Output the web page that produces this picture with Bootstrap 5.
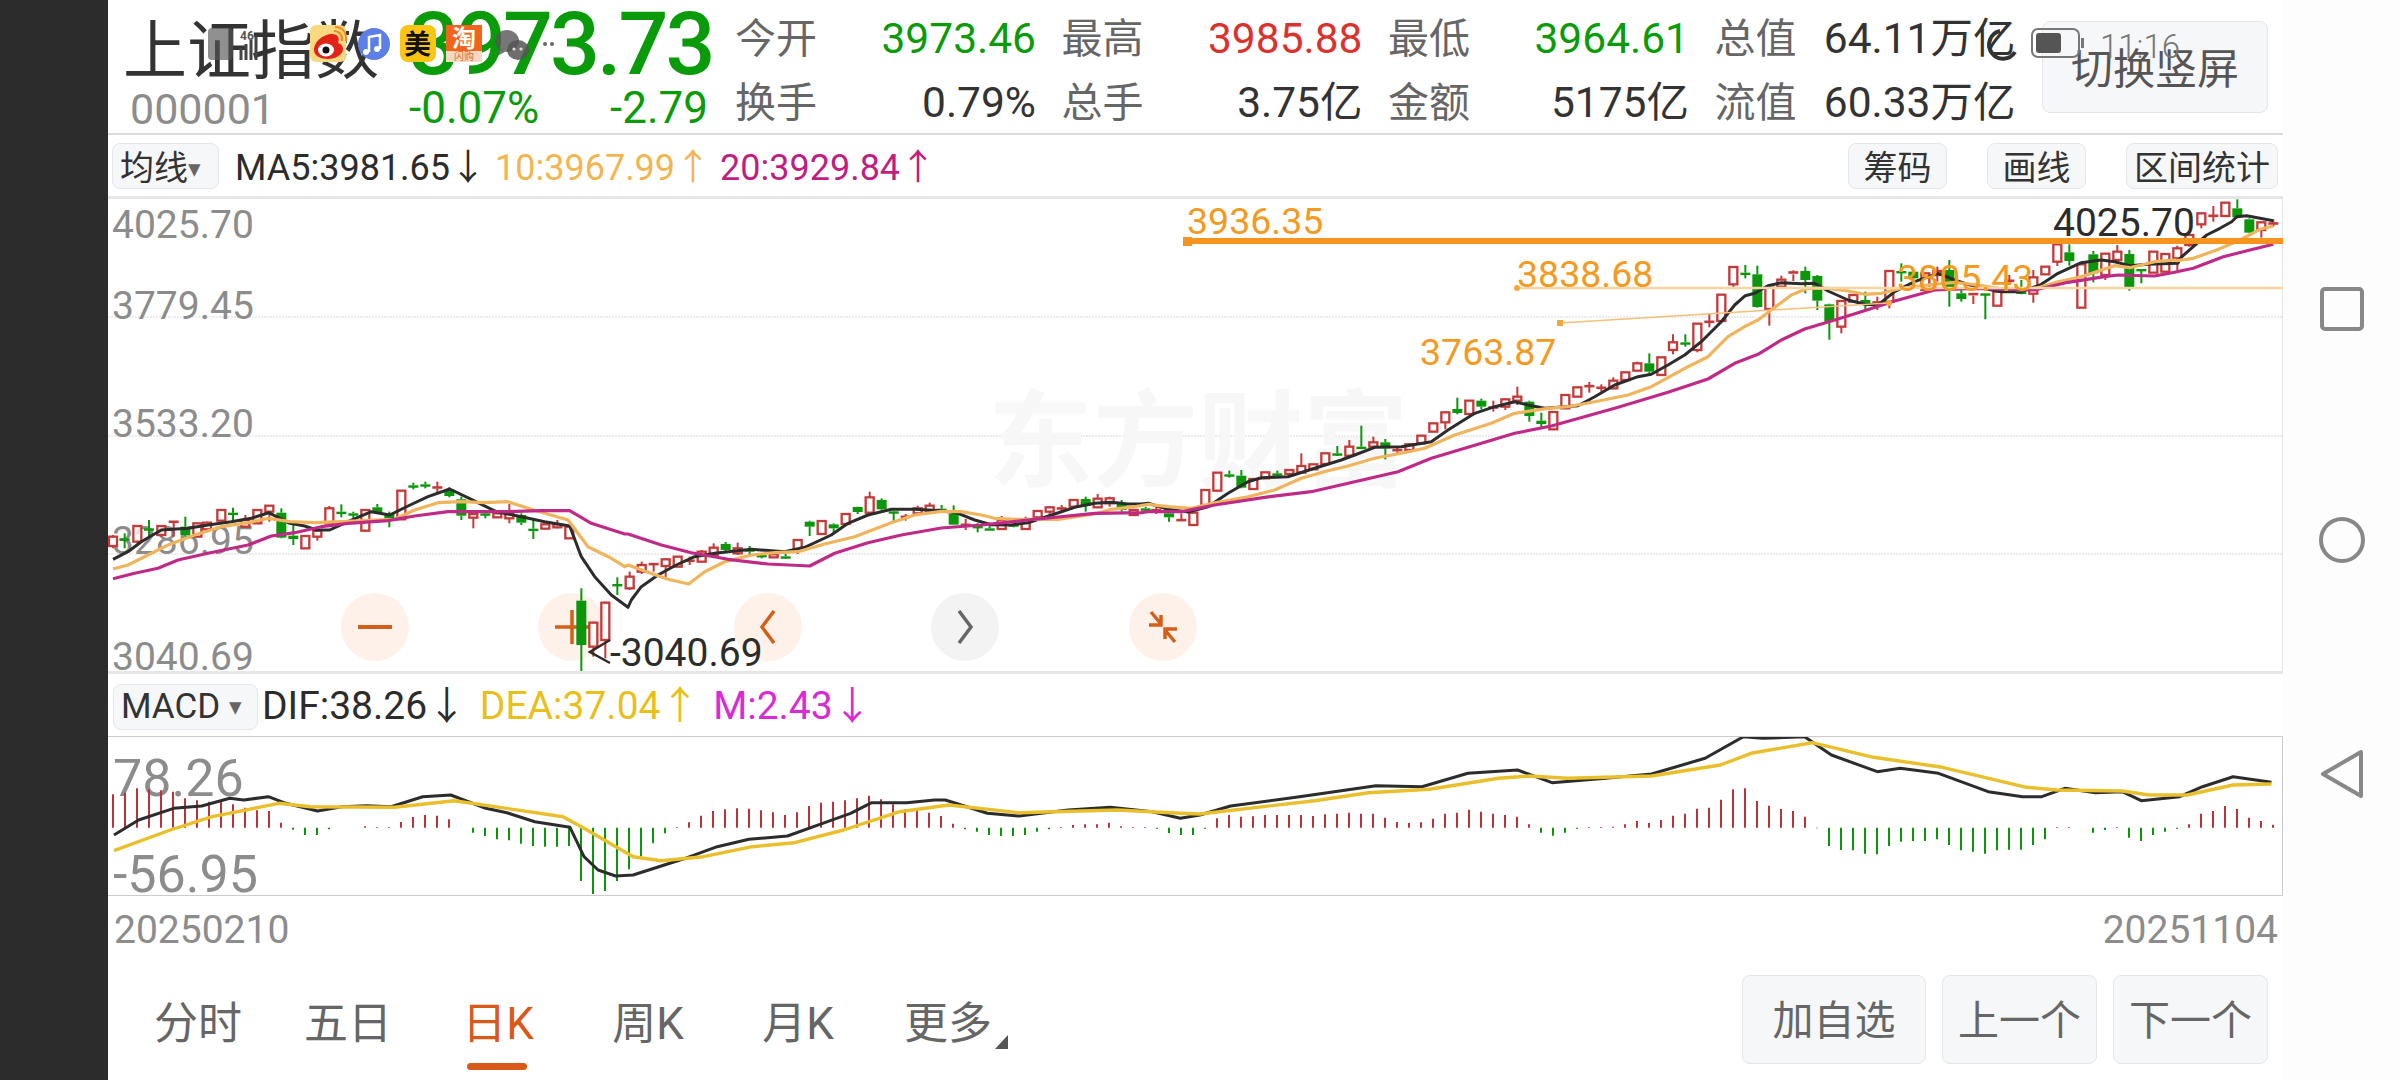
<!DOCTYPE html>
<html lang="zh">
<head>
<meta charset="utf-8">
<title>上证指数</title>
<link href="https://cdn.jsdelivr.net/npm/bootstrap@5.3.0/dist/css/bootstrap.min.css" rel="stylesheet">
<style>
html,body{margin:0;height:1080px;overflow:hidden;background:#fff}
body,button,text{font-family:"Roboto","Noto Sans CJK SC",sans-serif}
.app-shell{width:2400px;height:1080px}
.side-dark{width:108px;background:#2c2c2c;flex:none}
.side-nav{width:117px;background:#fdfdfd;flex:none;padding-top:287px;gap:186px}
.main-pane{width:2175px;flex:none;position:relative}
.head-row{height:135px;border-bottom:2px solid #dcdcdc;padding-left:15px}
.name-block{width:286px;flex:none}
.name-main{font-size:64px;line-height:72px;margin-top:16px;color:#333;white-space:nowrap}
.name-code{font-size:43px;line-height:44px;color:#8c8c8c;margin-left:7px;margin-top:-1px}
.price-block{width:299px;flex:none;margin-right:27px}
.price-big{font-size:88px;font-weight:500;line-height:88px;color:#0a9b0a;letter-spacing:-3px;white-space:nowrap}
.price-sub{font-size:44px;line-height:48px;color:#0a9b0a;margin-top:-4px}
.stat-grid{display:grid;grid-template-columns:repeat(4,80px 195.5px);column-gap:25.5px;grid-auto-rows:64px;padding-top:7px;font-size:42.5px;line-height:64px;height:134px}
.stat-label{color:#666;white-space:nowrap;font-size:41px}
.stat-val{text-align:right;color:#333;white-space:nowrap}
.tone-up{color:#d8332f}
.tone-down{color:#0a9b0a}
.soft-btn.btn{background:#f6f7f9;border:1.5px solid #e3e6ea;border-radius:8px;color:#555;padding:0;--bs-btn-hover-bg:#f6f7f9}
.switch-btn.btn{position:absolute;left:1934px;top:21px;width:226px;height:92px;font-size:42px;padding-top:5px}
.tool-row{height:64px;border-bottom:3px solid #e6e6e6;padding-left:4px;padding-top:8px}
.tool-btn.btn{height:46px;font-size:34px;line-height:40px;color:#333;white-space:nowrap;padding-top:3px}
.select-btn.btn{width:107px;text-align:left;padding-left:7px}
.caret-mark{font-size:25px;color:#666;vertical-align:3px;line-height:1}
.legend-line{font-size:36px;line-height:46px;white-space:nowrap;margin-top:2px}
.legend-ma5{color:#2c2c2c}
.legend-ma10{color:#f3b551}
.legend-ma20{color:#bf1f80}
.legend-dea{color:#e9bf1c}
.legend-m{color:#d82bd6}
.chart-tools{margin-left:auto;gap:40px;padding-right:5px}
.wide-tool.btn{width:99px}
.wider-tool.btn{width:152px}
.k-chart{height:472px;position:relative;border-right:1.5px solid #e4e4e4}
.k-chart svg,.macd-chart svg{display:block;position:relative}
.round-key{position:absolute;top:394px;width:68px;height:68px;border-radius:50%;background:#fdf1ea;border:0;padding:0}
.round-key.is-off{background:#f3f3f3}
.round-key svg{position:static;margin:auto}
.key-a{left:233px}.key-b{left:430px}.key-c{left:626px}.key-d{left:823px}.key-e{left:1021px}
.macd-tools{height:65px;padding-left:5px;padding-top:10px;border-top:3px solid #e6e6e6}
.macd-btn.btn{width:145px;height:46px;font-size:35px;line-height:40px;color:#333;text-align:left;padding-left:7px;white-space:nowrap}
.macd-legend{font-size:39px;line-height:46px;white-space:nowrap;margin-top:-1px}
.macd-legend span+span{margin-left:4px}
.macd-chart{height:160px;border-top:1.5px solid #ccc;border-bottom:1.5px solid #ccc;border-right:1.5px solid #ccc}
.date-row{height:67px;font-size:39px;line-height:68px;color:#8c8c8c;padding:0 5px 0 6px}
.tab-row{height:117px;padding-left:15px}
.tab-list .nav-link{width:150px;padding:31px 0 40px;font-size:44px;line-height:60px;color:#666;text-align:center;position:relative}
.tab-list .nav-link.active{color:#d9591b}
.tab-list .nav-link.active::after{content:"";position:absolute;left:44px;width:60px;top:100px;height:7px;border-radius:4px;background:#d9591b}
.more-mark{position:absolute;left:122px;top:72px;width:0;height:0;border-left:13px solid transparent;border-bottom:14px solid #555}
.foot-btns{margin-left:auto;gap:16px;padding:12px 15px 0 0}
.foot-btn.btn{height:89px;font-size:41px;color:#666;padding-top:5px}
.foot-a.btn{width:184px}.foot-b.btn{width:155px}
.status-layer{position:absolute;left:0;top:0;pointer-events:none}
.chart-axis{font-size:39px;fill:#8c8c8c}
.chart-note{font-size:37.5px;fill:#f29a22}
.chart-mark{font-size:39px;fill:#2c2c2c}
.wm-text{font-size:105px;font-weight:700;fill:#f7f7f7}
.macd-axis{font-size:52px;fill:#8c8c8c}
.st-time{font-size:33px;fill:#777;font-weight:300}
.st-mini{font-size:12px;fill:#555;font-weight:700}
.st-mei{font-size:27px;fill:#111;font-weight:700}
.st-tao{font-size:24px;fill:#fff;font-weight:700}
.st-shan{font-size:10px;fill:#e0662a}
</style>
</head>
<body>
<div class="app-shell d-flex">
  <div class="side-dark"></div>
  <div class="main-pane">
    <div class="head-row d-flex">
      <div class="name-block">
        <div class="name-main">上证指数</div>
        <div class="name-code">000001</div>
      </div>
      <div class="price-block">
        <div class="price-big">3973.73</div>
        <div class="price-sub d-flex justify-content-between"><span>-0.07%</span><span>-2.79</span></div>
      </div>
      <div class="stat-grid">
        <div class="stat-label">今开</div><div class="stat-val tone-down">3973.46</div>
        <div class="stat-label">最高</div><div class="stat-val tone-up">3985.88</div>
        <div class="stat-label">最低</div><div class="stat-val tone-down">3964.61</div>
        <div class="stat-label">总值</div><div class="stat-val">64.11万亿</div>
        <div class="stat-label">换手</div><div class="stat-val">0.79%</div>
        <div class="stat-label">总手</div><div class="stat-val">3.75亿</div>
        <div class="stat-label">金额</div><div class="stat-val">5175亿</div>
        <div class="stat-label">流值</div><div class="stat-val">60.33万亿</div>
      </div>
      <button class="btn soft-btn switch-btn">切换竖屏</button>
    </div>

    <div class="tool-row d-flex align-items-start">
      <button class="btn soft-btn tool-btn select-btn">均线<span class="caret-mark">▾</span></button>
      <div class="legend-line ms-3">
        <span class="legend-ma5">MA5:3981.65↓</span>
        <span class="legend-ma10">10:3967.99↑</span>
        <span class="legend-ma20">20:3929.84↑</span>
      </div>
      <div class="chart-tools d-flex">
        <button class="btn soft-btn tool-btn wide-tool">筹码</button>
        <button class="btn soft-btn tool-btn wide-tool">画线</button>
        <button class="btn soft-btn tool-btn wider-tool">区间统计</button>
      </div>
    </div>

    <div class="k-chart">
      <button class="round-key key-a" aria-label="缩小"><svg width="34" height="34" viewBox="0 0 34 34"><path d="M0 17H34" stroke="#d2601a" stroke-width="4"/></svg></button>
      <button class="round-key key-b" aria-label="放大"><svg width="34" height="34" viewBox="0 0 34 34"><path d="M0 17H34M17 0V34" stroke="#d2601a" stroke-width="3.5"/></svg></button>
      <button class="round-key key-c" aria-label="左移"><svg width="34" height="34" viewBox="0 0 34 34"><path d="M23 1L11 17L23 33" fill="none" stroke="#d2601a" stroke-width="3.5"/></svg></button>
      <button class="round-key key-d is-off" aria-label="右移"><svg width="34" height="34" viewBox="0 0 34 34"><path d="M11 1L23 17L11 33" fill="none" stroke="#666" stroke-width="3.5"/></svg></button>
      <button class="round-key key-e" aria-label="收起"><svg width="34" height="34" viewBox="0 0 34 34"><path d="M5 2L15 14M15 5V15H3M29 32L19 20M19 29V19H31" fill="none" stroke="#d2601a" stroke-width="3.5"/></svg></button>
      <svg id="kSvg" width="2175" height="472" viewBox="108 199 2175 472">
        <g stroke="#d8d8d8" stroke-width="1" stroke-dasharray="2 1">
          <path d="M108 317H2283M108 436H2283M108 554H2283"/>
        </g>
        <text class="wm-text" x="988" y="478">东方财富</text>
        <text class="chart-axis" x="112" y="238">4025.70</text>
        <text class="chart-axis" x="112" y="319">3779.45</text>
        <text class="chart-axis" x="112" y="437">3533.20</text>
        <text class="chart-axis" x="112" y="554">3286.95</text>
        <text class="chart-axis" x="112" y="670">3040.69</text>
        <g id="candles"></g>
        <polyline id="ma5" fill="none" stroke="#2c2c2c" stroke-width="3" stroke-linejoin="round"/>
        <polyline id="ma10" fill="none" stroke="#f0b45c" stroke-width="3.2" stroke-linejoin="round"/>
        <polyline id="ma20" fill="none" stroke="#bf2a87" stroke-width="3.2" stroke-linejoin="round"/>
        <path d="M1183 241H2283" stroke="#f7941d" stroke-width="6"/>
        <rect x="1183" y="237" width="9" height="9" fill="#f7941d"/>
        <path d="M1517 288H2283" stroke="#f4d5a4" stroke-width="2.5"/>
        <circle cx="1517" cy="288" r="3" fill="#f2a63c"/>
        <path d="M1560 323L1888 303" stroke="#f2c078" stroke-width="1.5"/>
        <rect x="1557" y="320" width="6" height="6" fill="#f2a63c"/>
        <circle cx="1889" cy="303" r="3" fill="#f2a63c"/>
        <text class="chart-note" x="1187" y="234">3936.35</text>
        <text class="chart-note" x="1517" y="287">3838.68</text>
        <text class="chart-note" x="1420" y="365">3763.87</text>
        <text class="chart-note" x="1897" y="291">3805.43</text>
        <text class="chart-mark" x="2053" y="236">4025.70</text>
        <path d="M610 640L590 652L610 663" fill="none" stroke="#2c2c2c" stroke-width="2.5"/>
        <text class="chart-mark" x="610" y="666">-3040.69</text>
      </svg>
    </div>

    <div class="macd-tools d-flex align-items-start">
      <button class="btn soft-btn macd-btn">MACD <span class="caret-mark">▾</span></button>
      <div class="macd-legend ms-1">
        <span class="legend-ma5">DIF:38.26↓</span>
        <span class="legend-dea">DEA:37.04↑</span>
        <span class="legend-m">M:2.43↓</span>
      </div>
    </div>

    <div class="macd-chart">
      <svg id="mSvg" width="2174" height="157" viewBox="108 737 2174 157">
        <text class="macd-axis" x="113" y="796">78.26</text>
        <text class="macd-axis" x="113" y="892">-56.95</text>
        <g id="bars"></g>
        <polyline id="dif" fill="none" stroke="#2c2c2c" stroke-width="3" stroke-linejoin="round"/>
        <polyline id="dea" fill="none" stroke="#e9bf2c" stroke-width="3.4" stroke-linejoin="round"/>
      </svg>
    </div>

    <div class="date-row d-flex justify-content-between"><span>20250210</span><span>20251104</span></div>

    <div class="tab-row d-flex">
      <ul class="nav tab-list flex-nowrap">
        <li class="nav-item"><a class="nav-link" href="#">分时</a></li>
        <li class="nav-item"><a class="nav-link" href="#">五日</a></li>
        <li class="nav-item"><a class="nav-link active" href="#">日K</a></li>
        <li class="nav-item"><a class="nav-link" href="#">周K</a></li>
        <li class="nav-item"><a class="nav-link" href="#">月K</a></li>
        <li class="nav-item"><a class="nav-link" href="#">更多<span class="more-mark"></span></a></li>
      </ul>
      <div class="foot-btns d-flex">
        <button class="btn soft-btn foot-btn foot-a">加自选</button>
        <button class="btn soft-btn foot-btn foot-b">上一个</button>
        <button class="btn soft-btn foot-btn foot-b">下一个</button>
      </div>
    </div>

    <svg class="status-layer" width="2175" height="135" viewBox="108 0 2175 135">
      <rect x="208" y="28" width="25" height="32" rx="4" fill="#555" opacity=".65"/>
      <text class="st-mini" x="240" y="40">46</text>
      <path d="M241 48v12M246 44v16M251 40v20M256 36v24" stroke="#444" stroke-width="3"/>
      <rect x="310" y="25" width="36" height="37" rx="6" fill="#f8d980"/>
      <path d="M314 50c0-9 10-16 18-16c6 0 8 4 6 9c4 1 5 4 5 6c0 6-8 10-15 10c-7 0-14-3-14-9z" fill="#e2231a"/>
      <ellipse cx="326" cy="50" rx="8" ry="6.5" fill="#fff"/>
      <circle cx="326" cy="50" r="3.5" fill="#111"/>
      <path d="M334 31c5 0 9 4 8 10M335 27c8 0 12 6 11 14" fill="none" stroke="#f08a1d" stroke-width="2"/>
      <circle cx="374" cy="44" r="16" fill="#5b7fe6"/>
      <path d="M369 52V37L380 35V49" fill="none" stroke="#fff" stroke-width="2.5"/>
      <circle cx="366" cy="52" r="3" fill="#fff"/><circle cx="377" cy="49" r="3" fill="#fff"/>
      <rect x="400" y="25" width="36" height="37" rx="8" fill="#fcc515"/>
      <text class="st-mei" x="404" y="54">美</text>
      <rect x="446" y="25" width="36" height="26" fill="#f0641e"/>
      <rect x="446" y="51" width="36" height="11" fill="#f6d9c4"/>
      <text class="st-tao" x="452" y="47">淘</text>
      <text class="st-shan" x="454" y="60">闪购</text>
      <ellipse cx="507" cy="41" rx="12" ry="11" fill="#555" opacity=".8"/>
      <path d="M500 49l-3 7l8-4z" fill="#555" opacity=".8"/>
      <ellipse cx="518" cy="50" rx="11" ry="10" fill="#555" opacity=".85"/>
      <circle cx="514" cy="49" r="1.6" fill="#ddd"/><circle cx="521" cy="49" r="1.6" fill="#ddd"/>
      <circle cx="545" cy="44" r="2" fill="#666"/><circle cx="552" cy="44" r="2" fill="#666"/>
      <path d="M2000 31A14 14 0 1 0 2015 52" fill="none" stroke="#333" stroke-width="4"/>
      <rect x="2032" y="29" width="47" height="28" rx="6" fill="none" stroke="#777" stroke-width="2"/>
      <rect x="2036" y="33" width="25" height="20" rx="3" fill="#555"/>
      <rect x="2081" y="38" width="3" height="10" fill="#777"/>
      <text class="st-time" x="2100" y="58">11:16</text>
    </svg>
  </div>
  <div class="side-nav d-flex flex-column align-items-center">
    <svg width="44" height="44" viewBox="0 0 44 44"><rect x="2" y="2" width="40" height="40" rx="3" fill="none" stroke="#888" stroke-width="4"/></svg>
    <svg width="46" height="46" viewBox="0 0 46 46"><circle cx="23" cy="23" r="21" fill="none" stroke="#888" stroke-width="4"/></svg>
    <svg width="44" height="50" viewBox="0 0 44 50"><path d="M41 3V47L3 25Z" fill="none" stroke="#888" stroke-width="4" stroke-linejoin="round"/></svg>
  </div>
</div>

<script>
var NS="http://www.w3.org/2000/svg";
function el(p,n,a){var e=document.createElementNS(NS,n);for(var k in a)e.setAttribute(k,a[k]);p.appendChild(e);return e;}
var crops=[
[108,470,[[15,'r',200,228,195,235],[50,'g',205,210,190,235],[88,'r',168,215,165,220],[123,'g',175,180,150,200],[160,'r',168,195,165,200],[197,'r',153,157,153,200],[232,'g',170,195,140,200],[268,'r',160,200],[297,'r',158,178,155,180],[340,'r',120,152,118,155],[375,'g',128,132,113,152],[412,'r',150,170,135,172],[448,'r',120,160],[484,'r',107,125,105,155],[520,'g',128,203,115,205],[556,'g',197,207,165,225],[592,'r',198,235],[628,'r',182,200,175,212],[664,'r',115,160,108,165],[700,'g',125,130,103,142],[736,'g',130,135,125,150],[772,'r',120,182,118,185],[808,'g',112,128,102,130],[844,'g',132,152,125,172],[880,'r',62,148],[916,'g',46,50,38,58],[952,'g',43,47,35,55],[988,'r',50,55,35,70],[1024,'g',58,78,52,82],[1060,'g',88,137,80,150],[1096,'r',132,143,130,175],[1132,'g',130,135,122,145],[1168,'r',130,142],[1204,'r',130,145,102,160],[1240,'g',135,158,130,165],[1276,'g',176,180,150,207],[1312,'r',163,176],[1348,'r',163,172,150,175],[1384,'r',170,205,165,207],[1420,'g',392,525,355,605],[1456,'r',458,530,455,560],[1492,'r',398,510,395,565],[1528,'g',342,346,322,375]]],
[628,440,[[5,'r',410,445,395,450],[41,'r',375,395,365,402],[77,'r',370,375,370,395],[113,'r',358,378,355,415],[149,'r',350,380],[185,'r',360,365,350,375],[221,'r',335,365,330,365],[257,'r',323,345,310,348],[293,'g',312,330,306,335],[329,'r',325,340,308,345],[365,'g',328,332,318,342],[401,'g',345,349,340,355],[437,'r',343,352],[473,'g',349,353,342,356],[509,'r',300,332,298,342],[545,'g',245,260,242,288],[581,'r',243,282,240,283],[617,'g',253,265,250,278],[653,'r',222,252],[689,'g',201,216,200,222],[725,'r',172,218,155,222],[761,'g',180,208,175,212],[797,'g',214,218,212,243],[833,'r',228,232,222,242],[869,'r',205,220,197,222],[905,'r',197,212,188,215],[941,'g',206,210,195,215],[977,'g',222,254,196,254],[1013,'r',252,257,237,270],[1049,'g',258,262,250,277],[1085,'g',265,269,256,270],[1121,'r',240,267,228,270],[1157,'g',253,257,245,262],[1193,'r',240,267,230,270],[1229,'r',213,232],[1265,'r',202,215,198,232],[1301,'r',203,207,195,212],[1337,'r',180,200],[1373,'g',177,197,170,215],[1409,'r',176,202,162,204],[1445,'r',175,190,170,200],[1481,'g',190,210,180,215],[1517,'r',210,225],[1553,'g',205,209,200,215]]],
[1148,310,[[25,'r',598,602,590,612],[63,'g',610,622,600,635],[100,'r',628,632,610,632],[136,'r',608,645],[172,'r',540,590],[208,'r',488,542],[244,'g',493,497,482,503],[280,'g',497,533,480,535],[316,'r',507,537],[352,'r',487,505],[388,'g',490,494,482,503],[424,'r',480,492],[460,'r',468,488,430,490],[496,'r',463,478],[532,'r',430,462],[568,'g',430,434,408,438],[604,'r',410,437,390,440],[640,'g',410,414,347,415],[676,'r',397,410,380,412],[712,'g',397,415,387,448],[748,'r',418,424,412,435],[784,'r',403,420,400,427],[820,'r',377,400],[856,'r',340,365],[892,'r',307,337,305,358],[928,'g',297,309,263,313],[964,'r',272,312],[1000,'g',272,290,266,298],[1036,'r',290,294,272,305],[1072,'r',268,290,265,300],[1108,'r',260,272,230,285],[1144,'g',275,318,272,335],[1180,'g',332,342,308,352],[1216,'r',306,358],[1252,'r',255,295],[1288,'r',232,260],[1324,'r',226,230,216,248],[1360,'r',231,235,223,245],[1396,'r',212,235,202,238],[1432,'r',187,210],[1468,'r',160,182,155,184],[1504,'g',160,185,130,190],[1540,'r',142,195]]],
[1668,195,[[15,'r',442,465,418,478],[52,'g',442,446,418,455],[88,'r',386,465,385,472],[124,'r',378,382,356,397],[160,'r',299,378],[196,'r',216,268,215,278],[232,'g',233,237,210,250],[268,'g',238,336,212,338],[304,'r',278,342,276,392],[340,'r',254,275,242,277],[376,'r',230,238,226,258],[412,'g',228,255,215,295],[448,'g',243,317,240,345],[484,'g',328,380,326,434],[520,'r',318,395,316,415],[556,'r',300,320],[592,'g',315,327,290,343],[628,'r',320,328,305,345],[664,'r',228,320,226,340],[700,'g',228,232,205,260],[736,'g',230,250,225,258],[772,'r',235,285],[808,'r',228,240,215,260],[844,'g',225,285,195,335],[880,'g',295,312,285,320],[916,'r',295,302,295,327],[952,'g',295,299,295,373],[988,'r',290,332],[1024,'r',255,260,240,270],[1060,'g',285,297,255,298],[1096,'r',247,296,225,323],[1132,'r',215,238,213,240],[1168,'r',148,200,148,213],[1204,'g',172,198,148,212],[1240,'r',208,338],[1276,'g',178,235,168,262],[1312,'r',176,240,175,255],[1348,'r',170,195,150,198],[1384,'g',177,280,165,287],[1420,'g',222,226,222,265],[1456,'r',170,233],[1492,'r',177,230],[1528,'r',160,190,152,225]]],
[1900,190,[[868,'r',135,165,130,170],[904,'r',70,103,68,115],[940,'r',75,80,48,95],[976,'r',38,78],[1012,'g',55,82,28,85],[1048,'g',88,128,85,130],[1084,'r',97,120,95,143],[1120,'r',98,102,88,110]]]
];
var cg=document.getElementById('candles');
crops.forEach(function(c){
  c[2].forEach(function(d){
    var x=c[0]+d[0]/3,t=c[1]+d[2]/3,b=c[1]+d[3]/3;
    var wt=d[4]!==undefined?c[1]+d[4]/3:t,wb=d[5]!==undefined?c[1]+d[5]/3:b;
    var col=d[1]==='r'?'#c23a3a':'#0b960b';
    if(wt<t)el(cg,'line',{x1:x,x2:x,y1:wt,y2:t,stroke:col,'stroke-width':2});
    if(wb>b)el(cg,'line',{x1:x,x2:x,y1:b,y2:wb,stroke:col,'stroke-width':2});
    if(d[1]==='r'){
      if(b-t<3)el(cg,'rect',{x:x-5,y:t-.5,width:10,height:2.6,fill:col});
      else el(cg,'rect',{x:x-4,y:t,width:8,height:b-t,fill:'#fff','fill-opacity':0.75,stroke:col,'stroke-width':2.3});
    }else{
      el(cg,'rect',{x:x-5,y:t,width:10,height:Math.max(b-t,2.4),fill:col});
    }
  });
});
function zp(o,a){var s=[];for(var i=0;i<a.length;i+=2)s.push((o[0]+a[i]/3).toFixed(1)+','+(o[1]+a[i+1]/3).toFixed(1));return s;}
var C7=[108,470],C8=[628,440],C9=[1148,310],C10=[1668,195],C11=[1900,190];
var ma5=[].concat(
zp(C7,[15,268,60,245,100,215,160,180,240,175,300,165,370,155,430,145,482,128,545,160,590,168,625,180,665,180,720,155,790,125,845,135,900,108,960,80,1025,57,1090,88,1165,125,1240,140,1310,155,1385,168,1420,260,1460,320,1510,375,1560,412]),
zp(C8,[10,480,40,440,90,405,145,375,200,350,260,340,370,328,470,335,530,322,610,285,660,250,720,225,790,208,860,208,940,212,990,220,1040,240,1090,254,1150,255,1200,248,1280,222,1340,202,1400,190,1450,187,1500,192,1540,192]),
zp(C9,[0,580,60,598,120,606,180,590,240,550,300,515,340,503,420,500,500,475,580,450,620,435,680,412,760,410,850,395,900,360,980,310,1040,290,1100,275,1140,285,1190,295,1290,287,1340,260,1400,225,1470,200,1510,193,1560,165]),
zp(C10,[50,480,100,440,160,380,200,330,232,302,260,295,300,272,340,263,400,266,440,265,480,288,540,315,590,328,630,330,680,290,740,260,810,235,860,255,920,275,1000,290,1060,290,1120,268,1170,235,1240,203,1300,195,1340,200,1385,212,1440,208,1530,205]),
zp(C11,[840,205,880,170,920,135,960,115,995,95,1010,80,1040,77,1120,92]));
var ma10=[].concat(
zp(C7,[15,297,60,285,120,255,180,225,260,195,340,170,420,158,482,145,545,155,620,158,700,155,800,150,860,148,920,120,990,98,1060,95,1130,98,1200,95,1270,118,1380,150,1440,230,1510,265,1550,290]),
zp(C8,[0,375,60,397,120,418,182,432,230,395,290,365,370,345,440,338,510,335,590,312,680,290,790,248,860,225,940,214,1000,215,1060,225,1100,235,1160,238,1290,238,1400,222,1450,208,1520,200]),
zp(C9,[0,583,60,590,130,595,200,578,300,560,380,540,460,505,540,482,600,468,680,445,760,430,830,415,920,375,1030,340,1100,310,1200,295,1260,290,1340,275,1440,255,1510,230,1560,203]),
zp(C10,[60,515,120,485,180,425,235,392,270,375,310,345,370,300,420,280,480,280,540,288,590,298,640,295,700,280,780,270,860,262,930,270,990,280,1060,285,1110,278,1170,260,1240,245,1310,222,1340,212,1385,218,1460,200,1520,195]),
zp(C11,[830,212,880,205,950,180,1020,150,1080,118,1120,108]));
var ma20=[].concat(
zp(C7,[15,326,80,310,150,295,210,270,300,250,420,225,490,198,560,188,640,170,720,160,840,152,920,138,1020,125,1200,125,1300,122,1385,122,1450,160,1550,192]),
zp(C8,[0,282,100,315,190,338,300,358,420,372,545,378,620,340,720,308,820,285,940,264,1060,255,1200,240,1400,220,1540,218]),
zp(C9,[0,605,100,605,200,585,350,562,490,545,620,515,750,485,850,445,950,415,1100,370,1210,348,1400,295,1550,250]),
zp(C10,[0,592,120,552,200,505,270,478,340,435,410,402,500,375,580,350,680,318,800,285,920,280,1100,285,1200,262,1310,245,1350,240,1460,243,1520,232]),
zp(C11,[830,245,880,235,970,200,1050,180,1120,163]));
document.getElementById('ma5').setAttribute('points',ma5.join(' '));
document.getElementById('ma10').setAttribute('points',ma10.join(' '));
document.getElementById('ma20').setAttribute('points',ma20.join(' '));
function zm(ox,sx,a){var s=[];for(var i=0;i<a.length;i+=2)s.push((ox+a[i]/sx).toFixed(1)+','+(670+a[i+1]/3).toFixed(1));return s;}
var dif=[].concat(zm(100,1.4255,[20,495,55,450,105,415,145,408,185,385,205,390,240,380,265,400,310,423,345,410,380,407,415,410,460,380,500,375,550,415,580,428,620,455,670,472,690,560,710,600,735,618,760,615,830,568,880,530,925,508,980,498,1030,460,1070,430,1100,398,1150,398,1190,390,1205,390,1265,430,1310,438,1380,420,1440,412,1500,425,1540,445]),
zm(1200,1.3067,[0,435,40,408,130,380,230,347,290,350,350,310,415,300,460,338,530,325,590,312,660,265,710,200,735,205,790,200,825,255,885,305,915,295,965,310,1030,365,1075,380,1100,380,1130,355,1170,368,1205,365,1230,392,1280,380,1310,350,1350,320,1400,337]));
var dea=[].concat(zm(100,1.4255,[20,542,100,480,160,440,255,400,300,410,420,412,505,392,660,440,690,475,760,560,800,572,860,560,930,530,990,518,1060,480,1140,425,1210,405,1310,428,1450,420,1540,430]),
zm(1200,1.3067,[0,432,150,392,220,368,300,358,390,325,430,318,480,325,590,318,680,285,720,250,800,218,880,262,970,292,1080,352,1120,360,1205,363,1240,375,1290,375,1350,345,1400,342]));
document.getElementById('dif').setAttribute('points',dif.join(' '));
document.getElementById('dea').setAttribute('points',dea.join(' '));
var h=[100,105,118,115,112,108,88,82,78,78,70,60,52,50,15,-6,-22,-22,-5,0,0,4,2,2,17,32,38,36,25,0,-15,-25,-35,-38,-48,-55,-57,-57,-55,-160,-200,-190,-160,-125,-85,-47,-17,2,16,36,50,55,58,57,52,46,38,46,65,75,78,82,88,96,85,70,55,50,45,35,12,-5,-12,-22,-25,-25,-22,-12,-5,2,8,10,10,15,4,2,2,-3,-16,-22,-22,-3,28,38,33,34,38,38,38,38,35,40,42,45,42,42,30,17,14,16,27,42,45,54,48,42,38,33,10,-15,-24,-15,-3,2,2,3,10,20,14,23,36,42,57,60,84,115,118,80,66,56,50,33,-2,-55,-67,-68,-78,-80,-55,-42,-40,-40,-35,-52,-68,-72,-78,-68,-66,-66,-52,-35,2,2,0,-15,-7,2,-30,-40,-22,-12,-3,10,42,50,65,56,30,20,9];
var bg=document.getElementById('bars');
h.forEach(function(v,i){
  if(v===0)return;
  var x=113+12*i,y0=827.7,y1=y0-v/3;
  el(bg,'line',{x1:x,x2:x,y1:y0,y2:Math.min(y1,894),stroke:v>0?'#b8343a':'#0b960b','stroke-width':2});
});
</script>
<script src="https://cdn.jsdelivr.net/npm/bootstrap@5.3.0/dist/js/bootstrap.bundle.min.js"></script>
</body>
</html>
